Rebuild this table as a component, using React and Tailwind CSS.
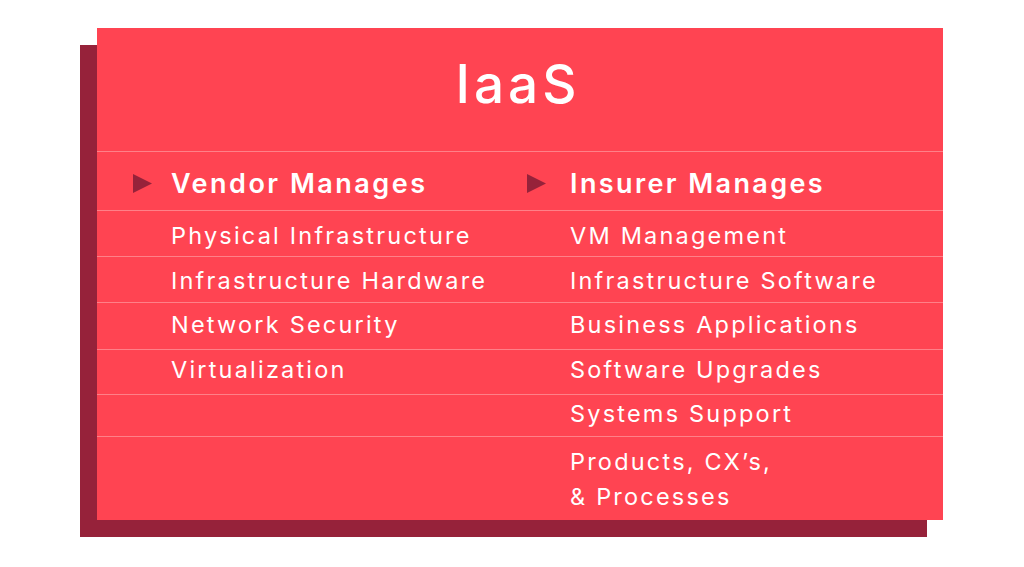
import React from "react";

const rowsLeft = ["Physical Infrastructure", "Infrastructure Hardware", "Network Security", "Virtualization", "", ""];
const rowsRight = ["VM Management", "Infrastructure Software", "Business Applications", "Software Upgrades", "Systems Support", "Products, CX’s,\n& Processes"];
const rowCls = [
  "h-[46px] pt-[13px]",
  "h-[46px] pt-[12px]",
  "h-[47px] pt-[10px]",
  "h-[45px] pt-[8px]",
  "h-[42px] pt-[7px]",
  "h-[84px] pt-[7px]",
];

function Tri() {
  return (
    <svg width="19" height="19" viewBox="0 0 19 19" className="shrink-0 mt-[4px]">
      <polygon points="0,0 19,9.5 0,19" fill="#96223a" />
    </svg>
  );
}

export default function App() {
  return (
    <div
      className="w-[1024px] h-[567px] bg-white relative overflow-hidden"
      style={{ fontFamily: "Inter, 'Open Sans', sans-serif" }}
    >
      <div className="absolute left-[80px] top-[45px] w-[847px] h-[492px] bg-[#96223a]" />
      <div className="absolute left-[97px] top-[28px] w-[846px] h-[492px] bg-[#ff4452] flex flex-col text-white">
        <div className="h-[123px] flex items-start justify-center pt-[30px]">
          <span className="text-[53px] font-medium tracking-[4px] leading-none ml-[-4px]">IaaS</span>
        </div>
        <div className="h-[59px] border-t border-[#ff8088] grid grid-cols-[394px_1fr] items-start pt-[18px]">
          <div className="flex items-start pl-[36px]">
            <Tri />
            <span className="ml-[19px] text-[27px] font-semibold tracking-[2.5px] leading-none">Vendor Manages</span>
          </div>
          <div className="flex items-start pl-[36px]">
            <Tri />
            <span className="ml-[24px] text-[27px] font-semibold tracking-[2.4px] leading-none">Insurer Manages</span>
          </div>
        </div>
        {rowsRight.map((r, i) => (
          <div
            key={i}
            className={`${rowCls[i]} border-t border-[#ff8088] grid grid-cols-[394px_1fr] items-start`}
          >
            <div className="pl-[74px] text-[23.5px] tracking-[2.2px] leading-none">{rowsLeft[i]}</div>
            <div className={`pl-[79px] text-[23.5px] tracking-[2.2px] whitespace-pre-line ${i === 5 ? "leading-[35px]" : "leading-none"}`}>{r}</div>
          </div>
        ))}
      </div>
    </div>
  );
}
